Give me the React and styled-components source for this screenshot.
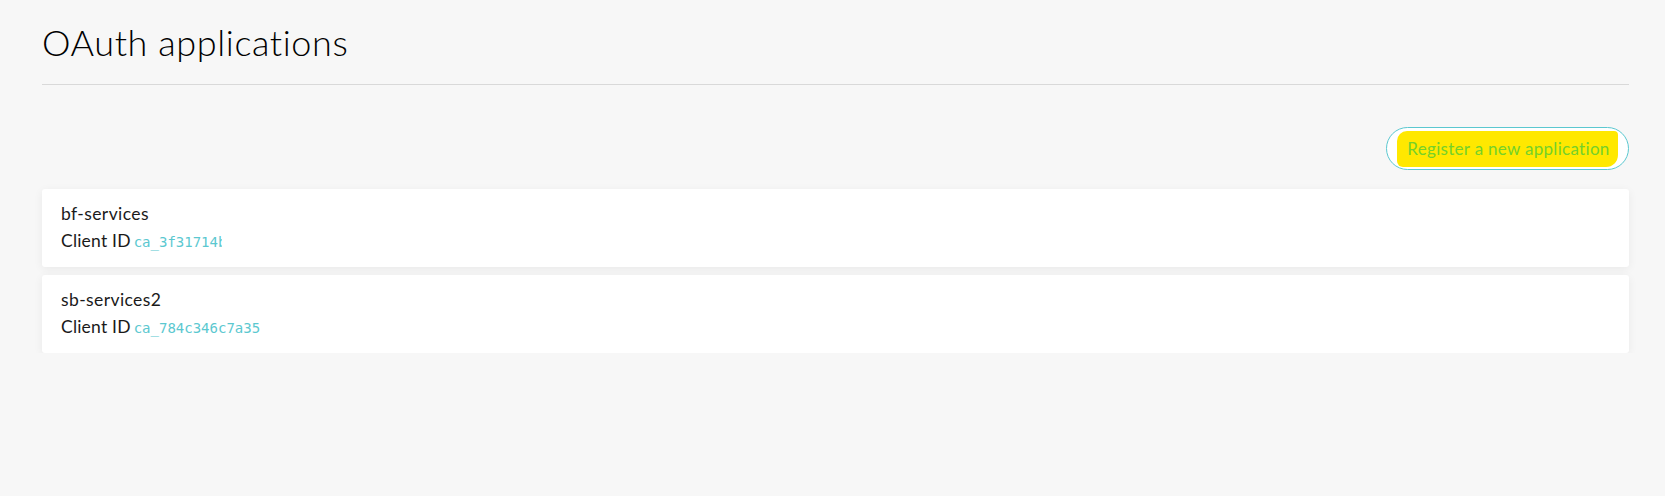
import React from 'react';
import styled, { createGlobalStyle } from 'styled-components';

const GlobalStyle = createGlobalStyle`
  html, body {
    margin: 0;
    padding: 0;
    background: #f7f7f7;
    font-family: Lato, "Open Sans", sans-serif;
    color: #1a1a1a;
  }
`;

const Page = styled.div`
  padding: 0 36px 0 42px;
`;

const Title = styled.h1`
  margin: 0;
  padding-top: 18px;
  font-size: 36px;
  font-weight: 300;
  line-height: 48px;
  color: #000;
  letter-spacing: 0.6px;
`;

const Divider = styled.hr`
  margin: 18px 0 0;
  border: 0;
  border-top: 1px solid #d9d9d9;
`;

const Toolbar = styled.div`
  display: flex;
  justify-content: flex-end;
  margin-top: 42px;
  margin-bottom: 19px;
`;

const OutlineButton = styled.button`
  height: 43px;
  width: 243px;
  padding: 0;
  border: 1px solid #5bc8d0;
  border-radius: 22px;
  background: #fff;
  font-family: inherit;
  font-size: 17px;
  letter-spacing: 0.3px;
  color: #74d12a;
  cursor: pointer;
  display: flex;
  align-items: center;
  justify-content: center;
`;

const Highlight = styled.span`
  background: #ffe800;
  padding: 7px 8px 8px 10px;
  border-radius: 10px 4px 12px 6px;
`;

const List = styled.div`
  display: flex;
  flex-direction: column;
  gap: 8px;
`;

const Card = styled.div`
  background: #fff;
  border-radius: 3px;
  box-shadow: 0 2px 10px rgba(0, 0, 0, 0.06);
  height: 78px;
  box-sizing: border-box;
  padding: 12px 19px;
  display: flex;
  flex-direction: column;
  justify-content: center;
`;

const AppName = styled.div`
  font-size: 17.5px;
  line-height: 27px;
  letter-spacing: 0.4px;
  color: #1a1a1a;
`;

const ClientRow = styled.div`
  font-size: 17.5px;
  line-height: 27px;
  letter-spacing: 0.2px;
  color: #1a1a1a;
  display: flex;
  align-items: baseline;
  gap: 3px;
`;

const ClientId = styled.code`
  font-family: "DejaVu Sans Mono", "Liberation Mono", monospace;
  font-size: 14px;
  letter-spacing: 0;
  color: #5bc8d0;
  display: inline-block;
  max-width: ${p => (p.clip ? `${p.clip}px` : 'none')};
  overflow: hidden;
  white-space: nowrap;
`;

const apps = [
  { name: 'bf-services', id: 'ca_3f31714b2c8e', clip: 88 },
  { name: 'sb-services2', id: 'ca_784c346c7a35' },
];

export default function App() {
  return (
    <Page>
      <GlobalStyle />
      <Title>OAuth applications</Title>
      <Divider />
      <Toolbar>
        <OutlineButton>
          <Highlight>Register a new application</Highlight>
        </OutlineButton>
      </Toolbar>
      <List>
        {apps.map(app => (
          <Card key={app.name}>
            <AppName>{app.name}</AppName>
            <ClientRow>
              Client ID <ClientId clip={app.clip}>{app.id}</ClientId>
            </ClientRow>
          </Card>
        ))}
      </List>
    </Page>
  );
}
